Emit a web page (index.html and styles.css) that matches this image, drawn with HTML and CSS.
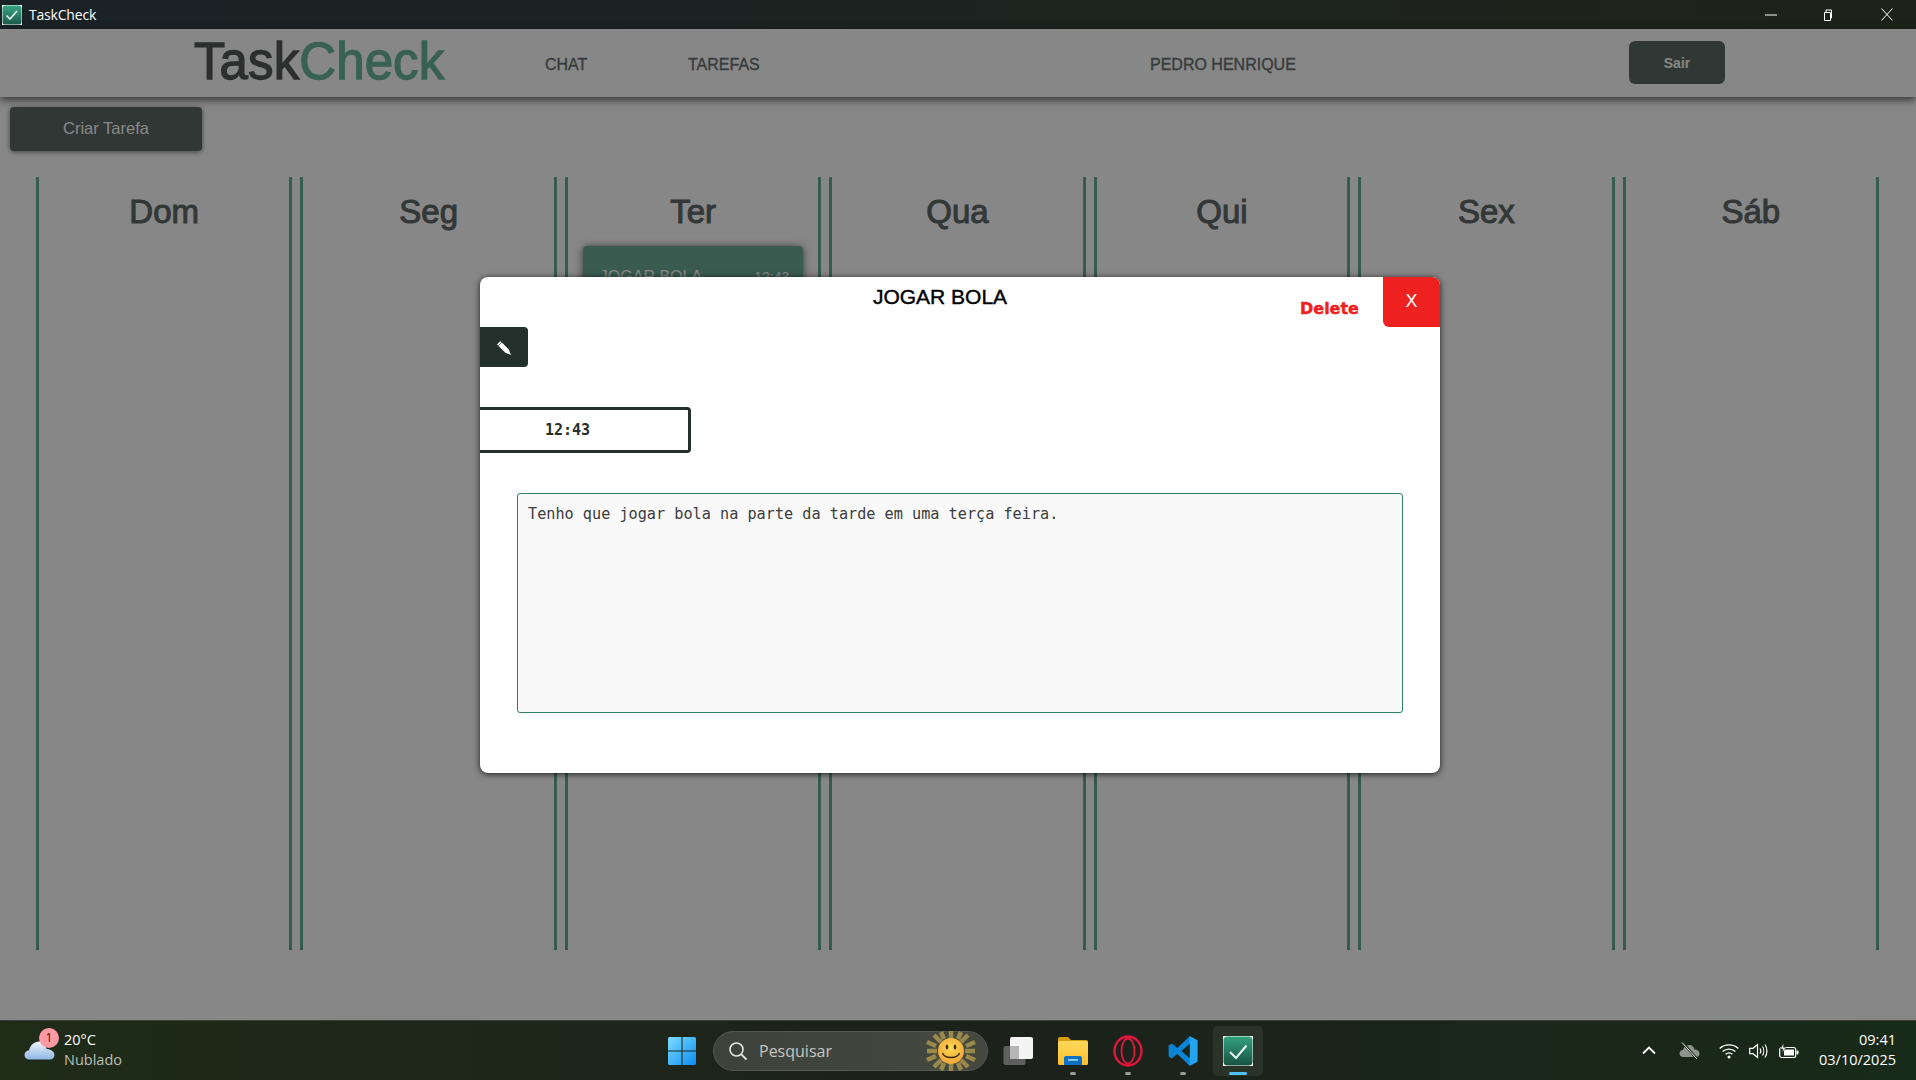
FILE: index.html
```html
<!DOCTYPE html>
<html lang="en">

<head>
    <meta charset="UTF-8">
    <title>TaskCheck</title>
    <link rel="stylesheet" href="styles.css">
</head>

<body>
    <div class="titlebar">
        <div class="titlebar-left">
            <svg class="app-icon" width="20" height="20" viewBox="0 0 20 20">
                <defs>
                    <linearGradient id="tcSmall" x1="0" y1="0" x2="0" y2="1">
                        <stop offset="0" stop-color="#3aa583"/>
                        <stop offset="1" stop-color="#1c5c4a"/>
                    </linearGradient>
                </defs>
                <rect width="20" height="20" fill="#fff"/>
                <rect x="0.5" y="0.5" width="19" height="19" rx="2.5" fill="url(#tcSmall)"/>
                <path d="M4.5 10.5l3.5 3.5 7-8" fill="none" stroke="#e6f3ee" stroke-width="1.6"/>
            </svg>
            <span>TaskCheck</span>
        </div>
        <div class="window-controls">
            <svg class="ctrl-min" width="12" height="12" viewBox="0 0 12 12"><path d="M0 6h12" stroke="#fff" stroke-width="1"/></svg>
            <svg width="12" height="14" viewBox="0 0 12 14"><path d="M2.5 4.5h6v8h-6zM4 4.500V2h5.500v8H8.500" fill="none" stroke="#fff" stroke-width="1"/></svg>
            <svg width="12" height="13" viewBox="0 0 12 13"><path d="M0.500 0.500l11 12M11.500 0.500l-11 12" stroke="#fff" stroke-width="1"/></svg>
        </div>
    </div>

    <div class="app">
        <nav class="navbar">
            <div class="logo">Task<span class="logo-green">Check</span></div>
            <a class="nav-link nav-chat">CHAT</a>
            <a class="nav-link nav-tasks">TAREFAS</a>
            <span class="nav-link nav-user">PEDRO HENRIQUE</span>
            <button class="btn-logout">Sair</button>
        </nav>

        <button class="btn-create">Criar Tarefa</button>

        <div class="week">
            <div class="day"><h2>Dom</h2></div>
            <div class="day"><h2>Seg</h2></div>
            <div class="day">
                <h2>Ter</h2>
                <div class="task-card">
                    <span>JOGAR BOLA</span>
                    <span class="task-time">12:43</span>
                </div>
            </div>
            <div class="day"><h2>Qua</h2></div>
            <div class="day"><h2>Qui</h2></div>
            <div class="day"><h2>Sex</h2></div>
            <div class="day"><h2>Sáb</h2></div>
        </div>

        <div class="overlay">
            <div class="modal">
                <div class="modal-header">
                    <h3 class="modal-title">JOGAR BOLA</h3>
                    <a class="modal-delete">Delete</a>
                    <button class="modal-close">X</button>
                </div>
                <button class="btn-edit">
                    <svg width="14" height="14" viewBox="0 0 14 14"><path d="M0 3.400L3.400 0L11.800 8.400L14 14L8.400 11.800Z" fill="#fff"/><path d="M1 5L5 1" stroke="#24302c" stroke-width="0.600"/></svg>
                </button>
                <div class="time-field">12:43</div>
                <textarea class="modal-text" readonly>Tenho que jogar bola na parte da tarde em uma terça feira.</textarea>
            </div>
        </div>
    </div>

    <div class="taskbar">
        <div class="weather">
            <div class="weather-icon">
                <svg width="31" height="22" viewBox="0 0 31 22">
                    <defs>
                        <linearGradient id="cloud" x1="0" y1="0" x2="0" y2="1">
                            <stop offset="0" stop-color="#f1f5fb"/>
                            <stop offset="1" stop-color="#8fb6ea"/>
                        </linearGradient>
                    </defs>
                    <path d="M6 20.500C2.500 20.500 0.500 18.500 0.500 16C0.500 13.500 2.500 11.500 5 11.500C6 6.500 10 2.500 15 2.500C19 2.500 22 6 22.500 10C26.500 10 30.500 12.500 30.500 16C30.500 18.500 28.500 20.500 26 20.500Z" fill="url(#cloud)"/>
                </svg>
                <span class="weather-badge">1</span>
            </div>
            <div class="weather-text">
                <span class="weather-temp">20°C</span>
                <span class="weather-desc">Nublado</span>
            </div>
        </div>

        <div class="taskbar-center">
            <div class="task-item">
                <svg width="30" height="30" viewBox="0 0 30 30">
                    <defs>
                        <linearGradient id="win" x1="0" y1="0" x2="1" y2="1">
                            <stop offset="0" stop-color="#7fdcff"/>
                            <stop offset="1" stop-color="#0a8cf0"/>
                        </linearGradient>
                    </defs>
                    <path d="M1 2.500a1.500 1.500 0 0 1 1.500-1.500H14.500V14.500H1ZM15.500 1H27.500a1.500 1.500 0 0 1 1.500 1.500V14.500H15.500ZM1 15.500H14.500V29H2.500a1.500 1.500 0 0 1-1.500-1.500ZM15.500 15.500H29V27.500a1.500 1.500 0 0 1-1.500 1.500H15.500Z" fill="url(#win)"/>
                </svg>
            </div>

            <div class="search-box">
                <svg width="20" height="20" viewBox="0 0 20 20"><circle cx="8.500" cy="8.500" r="6.500" fill="none" stroke="#e4e6e2" stroke-width="1.600"/><path d="M13.300 13.300L18.500 18.500" stroke="#e4e6e2" stroke-width="1.800"/></svg>
                <span class="search-text">Pesquisar</span>
                <svg class="search-sun" width="50" height="40" viewBox="0 0 50 40">
                    <defs>
                        <radialGradient id="face" cx="0.500" cy="0.400" r="0.600">
                            <stop offset="0" stop-color="#ffd84e"/>
                            <stop offset="1" stop-color="#f0a63a"/>
                        </radialGradient>
                    </defs>
                    <g stroke="#a8964e" stroke-width="4.500" opacity="0.850">
                        <path d="M25 0V8M25 32V40M1 20H11M39 20H49M8 4l7 7M42 4l-7 7M8 36l7-7M42 36l-7-7M15 1l3 7M35 1l-3 7M15 39l3-7M35 39l-3-7M1 11l9 4M49 11l-9 4M1 29l9-4M49 29l-9-4"/>
                    </g>
                    <circle cx="25" cy="20" r="13" fill="url(#face)"/>
                    <ellipse cx="21" cy="16" rx="1.300" ry="2.500" fill="#3a2a10"/>
                    <ellipse cx="29" cy="16" rx="1.300" ry="2.500" fill="#3a2a10"/>
                    <path d="M16.500 22c2 6 15 6 17 0" fill="none" stroke="#3a2a10" stroke-width="1.400"/>
                </svg>
            </div>

            <div class="task-item">
                <svg width="30" height="28" viewBox="0 0 30 28">
                    <rect x="0.500" y="9" width="22" height="19" rx="2" fill="#5f5f5f"/>
                    <rect x="7" y="0" width="23" height="22" rx="2" fill="#f4f4f4"/>
                    <path d="M7 9h9a0 0 0 0 1 0 0V22H7Z" fill="#b5b5b5"/>
                </svg>
            </div>

            <div class="task-item has-dot">
                <svg width="30" height="28" viewBox="0 0 30 28">
                    <defs>
                        <linearGradient id="folder" x1="0" y1="0" x2="0" y2="1">
                            <stop offset="0" stop-color="#ffd95c"/>
                            <stop offset="1" stop-color="#fbbf2e"/>
                        </linearGradient>
                    </defs>
                    <path d="M0 2a2 2 0 0 1 2-2H10L13 3H28a2 2 0 0 1 2 2V8H0Z" fill="#d89e10"/>
                    <rect y="4" width="30" height="24" rx="1.500" fill="url(#folder)"/>
                    <path d="M6 28V21a2 2 0 0 1 2-2H22a2 2 0 0 1 2 2V28Z" fill="#0f6fc4"/>
                    <rect x="10" y="22" width="10" height="1.800" fill="#8fd0f5"/>
                </svg>
            </div>

            <div class="task-item has-dot">
                <svg width="30" height="32" viewBox="0 0 30 32">
                    <ellipse cx="15" cy="16" rx="13.500" ry="14.500" fill="none" stroke="#e3173e" stroke-width="2.400"/>
                    <ellipse cx="15" cy="16" rx="6.500" ry="12.500" fill="none" stroke="#e3173e" stroke-width="1.800"/>
                </svg>
            </div>

            <div class="task-item has-dot">
                <svg width="30" height="32" viewBox="0 0 100 100">
                    <path fill-rule="evenodd" d="M72 1L98 14V86L72 99L31 60L13 75L2 68V32L13 25L31 40ZM72 27L46 50L72 73Z" fill="#0a85d6"/>
                    <path d="M72 1L98 14V86L72 99Z" fill="#22a5ee"/>
                    <path d="M72 27L46 50L72 73Z" fill="#1d2418"/>
                </svg>
            </div>

            <div class="task-item is-active">
                <svg width="30" height="30" viewBox="0 0 30 30">
                    <defs>
                        <linearGradient id="tcBig" x1="0" y1="0" x2="0" y2="1">
                            <stop offset="0" stop-color="#33a181"/>
                            <stop offset="1" stop-color="#17523f"/>
                        </linearGradient>
                    </defs>
                    <rect width="30" height="30" fill="#fff"/>
                    <rect x="0.500" y="0.500" width="29" height="29" rx="4" fill="url(#tcBig)"/>
                    <path d="M7 16l6 6 10.500-12.500" fill="none" stroke="#e8f3ee" stroke-width="2"/>
                </svg>
            </div>
        </div>

        <div class="tray">
            <svg class="tray-chevron" width="14" height="9" viewBox="0 0 14 9"><path d="M1 7.500L7 1.500L13 7.500" fill="none" stroke="#fff" stroke-width="1.800"/></svg>
            <svg class="tray-cloud" width="21" height="18" viewBox="0 0 21 18"><path d="M4.500 15C2 15 0.500 13.500 0.500 11.500C0.500 9.500 2 8 4 8C4.500 5 7 3 10 3C13 3 15 5 15.500 7.500C18 7.500 20.500 9 20.500 11.500C20.500 13.500 19 15 17 15Z" fill="#8d958b"/><path d="M4 1L18 17" stroke="#1c2a1a" stroke-width="2.500"/><path d="M3 0.500L18 17" stroke="#f2f2f2" stroke-width="1"/></svg>
            <svg class="tray-wifi" width="20" height="16" viewBox="0 0 20 16"><g fill="none" stroke="#fff" stroke-width="1.300"><path d="M0.700 5.500C5.800 0.700 14.200 0.700 19.300 5.500"/><path d="M3.600 8.500C7.200 5.200 12.800 5.200 16.400 8.500"/><path d="M6.600 11.300C8.600 9.700 11.400 9.700 13.400 11.300"/></g><circle cx="10" cy="14" r="1.500" fill="#fff"/></svg>
            <svg class="tray-sound" width="20" height="16" viewBox="0 0 20 16"><g fill="none" stroke="#fff" stroke-width="1.200"><path d="M0.700 5.300H4L8.500 1.500V14.500L4 10.700H0.700Z"/><path d="M11 5.500C12 7 12 9 11 10.500"/><path d="M13.500 3.500C15.200 6 15.200 10 13.500 12.500"/><path d="M16 1.500C18.600 5 18.600 11 16 14.500"/></g></svg>
            <svg class="tray-battery" width="20" height="16" viewBox="0 0 20 16"><rect x="0.700" y="4.500" width="16" height="10" rx="2" fill="none" stroke="#fff" stroke-width="1.200"/><rect x="5" y="6.500" width="10" height="6" fill="#fff"/><rect x="17.500" y="7.500" width="2" height="4" rx="1" fill="#fff"/><path d="M4.500 0L1.500 6H4L3 10L7 4.500H4.500Z" fill="#fff" stroke="#1c2a1a" stroke-width="0.500"/></svg>
            <div class="clock">
                <span>09:41</span>
                <span>03/10/2025</span>
            </div>
        </div>
    </div>
</body>

</html>
```

FILE: styles.css
```css
* {
    box-sizing: border-box;
}

body {
    margin: 0;
    height: 1080px;
    width: 1916px;
    display: flex;
    flex-direction: column;
    overflow: hidden;
    background-color: #fff;
    font-family: "Liberation Sans", Arial, sans-serif;
}

button {
    font-family: inherit;
    border: none;
}

/* window title bar */
.titlebar {
    height: 29px;
    display: flex;
    justify-content: space-between;
    align-items: center;
    background: linear-gradient(90deg, #1b2226, #1e2319);
    color: #fff;
}

.titlebar-left {
    display: flex;
    align-items: center;
    gap: 7px;
    padding-left: 2px;
    font-family: "Open Sans", sans-serif;
    font-size: 14px;
    letter-spacing: -0.2px;
}

.window-controls {
    display: flex;
    align-items: center;
    gap: 47px;
    padding-right: 23px;
}

.ctrl-min {
    margin-right: -2px;
}

/* app, colours are the undimmed ones, the overlay darkens them */
.app {
    position: relative;
    flex: 1;
    background-color: #fff;
}

.navbar {
    height: 68px;
    display: flex;
    align-items: center;
    padding-left: 194px;
    box-shadow: 0 3px 8px rgba(0, 0, 0, 0.6);
}

.logo {
    width: 351px;
    font-size: 51px;
    letter-spacing: 0.1px;
    color: #555958;
    -webkit-text-stroke: 1.3px #555958;
    margin-top: -4px;
}

.logo-green {
    color: #6ab89e;
    -webkit-text-stroke: 1.3px #6ab89e;
}

.nav-link {
    font-size: 16px;
    color: #6a7171;
    -webkit-text-stroke: 0.35px #6a7171;
    margin-top: 4px;
}

.nav-chat {
    width: 143px;
}

.nav-tasks {
    width: 462px;
}

.nav-user {
    width: 479px;
}

.btn-logout {
    width: 96px;
    height: 43px;
    margin-top: -2px;
    border-radius: 6px;
    background-color: #5b6864;
    color: #fff;
    font-size: 14px;
    font-weight: bold;
    padding-top: 3px;
}

.btn-create {
    display: block;
    width: 192px;
    height: 44px;
    margin: 10px 0 0 10px;
    padding-bottom: 3px;
    border-radius: 4px;
    background-color: #5b6864;
    color: #fff;
    font-size: 16.5px;
    box-shadow: 0 1px 5px rgba(0, 0, 0, 0.5);
}

.week {
    display: grid;
    grid-template-columns: repeat(7, 1fr);
    gap: 8px;
    height: 773px;
    margin: 26px 37px 0 36px;
}

.day {
    border-left: 3px solid #65ac96;
    border-right: 3px solid #65ac96;
}

.day h2 {
    margin: 16px 0 0;
    text-align: center;
    font-size: 33px;
    font-weight: normal;
    color: #606968;
    -webkit-text-stroke: 1px #606968;
}

.task-card {
    display: flex;
    justify-content: space-between;
    align-items: baseline;
    height: 60px;
    margin: 15px 15px 0;
    padding: 22px 14px 0 17px;
    border-radius: 4px;
    background-color: #6dad97;
    color: #fff;
    font-size: 16px;
    box-shadow: 0 1px 8px rgba(0, 0, 0, 0.6);
}

.task-time {
    font-size: 14px;
}

/* modal */
.overlay {
    position: absolute;
    inset: 0;
    display: flex;
    justify-content: center;
    align-items: center;
    padding-left: 4px;
    background-color: rgba(0, 0, 0, 0.47);
}

.modal {
    width: 960px;
    height: 496px;
    overflow: hidden;
    border-radius: 8px;
    background-color: #fff;
    box-shadow: 0 1px 6px rgba(0, 0, 0, 0.8);
}

.modal-header {
    display: flex;
    align-items: flex-start;
    height: 50px;
}

.modal-title {
    flex: 1;
    margin: 8px 0 0;
    padding-left: 100px;
    text-align: center;
    font-size: 21px;
    font-weight: normal;
    color: #000;
    -webkit-text-stroke: 0.4px #000;
}

.modal-delete {
    width: 83px;
    margin-top: 22px;
    font-family: "DejaVu Sans", sans-serif;
    font-size: 16px;
    font-weight: bold;
    color: #ee2020;
    -webkit-text-stroke: 0.4px #ee2020;
}

.modal-close {
    width: 57px;
    height: 50px;
    border-bottom-left-radius: 6px;
    background-color: #ee2020;
    color: #fff;
    font-size: 18px;
}

.btn-edit {
    display: flex;
    justify-content: center;
    align-items: center;
    width: 48px;
    height: 40px;
    padding: 2px 0 0;
    border-radius: 0 4px 4px 0;
    background-color: #24302c;
}

.time-field {
    width: 211px;
    height: 46px;
    margin-top: 40px;
    padding-left: 65px;
    border: 3px solid #24302c;
    border-left: none;
    border-radius: 0 4px 4px 0;
    line-height: 40px;
    font-family: "DejaVu Sans Mono", monospace;
    font-size: 15px;
    font-weight: bold;
    color: #24302c;
}

.modal-text {
    display: block;
    width: 886px;
    height: 220px;
    margin: 40px 0 0 37px;
    padding: 10px;
    border: 1px solid #2f8069;
    border-radius: 3px;
    outline: none;
    resize: none;
    background-color: #f9f9f9;
    font-family: "DejaVu Sans Mono", monospace;
    font-size: 15.2px;
    line-height: 20px;
    color: #3c3c3c;
}

/* windows taskbar */
.taskbar {
    height: 60px;
    display: grid;
    grid-template-columns: 657px auto 1fr;
    align-items: center;
    border-top: 1px solid #3c4039;
    background: linear-gradient(90deg, #1f2c18, #1c211b 50%, #182a18);
    color: #fff;
}

.weather {
    display: flex;
    align-items: center;
    padding-left: 24px;
    gap: 8px;
}

.weather-icon {
    position: relative;
    width: 32px;
    height: 40px;
    padding-top: 8px;
}

.weather-badge {
    position: absolute;
    top: -3px;
    left: 15px;
    width: 20px;
    height: 20px;
    border-radius: 50%;
    background-color: #ff99a4;
    color: #1c1c1c;
    font-family: "Open Sans", sans-serif;
    font-size: 12px;
    line-height: 20px;
    text-align: center;
}

.weather-text {
    display: flex;
    flex-direction: column;
    margin-top: -2px;
    font-family: "Open Sans", sans-serif;
    font-size: 14.5px;
    line-height: 20px;
}

.weather-desc {
    color: #b9bfb6;
}

.taskbar-center {
    display: flex;
    align-items: center;
    gap: 5px;
}

.task-item {
    position: relative;
    width: 50px;
    height: 50px;
    display: flex;
    justify-content: center;
    align-items: center;
    border-radius: 5px;
}

.task-item.is-active {
    background-color: #2b3328;
}

.has-dot::after,
.is-active::after {
    content: "";
    position: absolute;
    left: 22px;
    bottom: 1px;
    width: 6px;
    height: 3px;
    border-radius: 2px;
    background-color: #9a9a9a;
}

.is-active::after {
    left: 16px;
    width: 18px;
    background-color: #4cc2ff;
}

.search-box {
    width: 275px;
    height: 40px;
    margin-left: 1px;
    display: flex;
    align-items: center;
    padding-left: 14px;
    border: 1px solid #545850;
    border-radius: 20px;
    background: linear-gradient(90deg, #3d423b, #45483f);
    color: #c4c6c1;
    font-family: "Open Sans", sans-serif;
    font-size: 16px;
}

.search-text {
    width: 167px;
    margin-left: 11px;
}

.search-sun {
    flex: none;
}

.tray {
    display: flex;
    align-items: center;
    justify-content: flex-end;
    padding-right: 20px;
}

.tray-chevron {
    margin-right: 23px;
}

.tray-cloud {
    margin-right: 19px;
}

.tray-wifi {
    margin-right: 10px;
}

.tray-sound {
    margin-right: 10px;
}

.tray-battery {
    margin-right: 20px;
}

.clock {
    display: flex;
    flex-direction: column;
    align-items: flex-end;
    margin-top: -2px;
    font-family: "Open Sans", sans-serif;
    font-size: 14.5px;
    line-height: 20px;
}
```
